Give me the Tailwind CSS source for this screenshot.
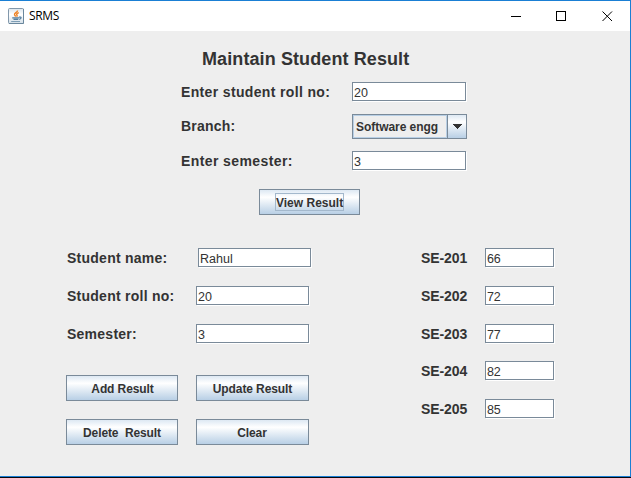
<!DOCTYPE html>
<html lang="en">
<head>
<meta charset="utf-8">
<title>SRMS</title>
<script src="https://cdn.jsdelivr.net/npm/@tailwindcss/browser@4"></script>
</head>
<body class="w-[631px] h-[478px] overflow-hidden bg-[#05070d] font-['Liberation_Sans',Arial,sans-serif] text-[#333333]">
<div class="w-[631px] h-[477px] border-t border-r border-b border-[#1a7fd4] bg-[#eeeeee] flex flex-col whitespace-pre">
  <header class="h-[30px] shrink-0 bg-white flex items-center pl-2">
    <svg class="w-4 h-4 shrink-0" viewBox="0 0 16 16">
      <defs><linearGradient id="ic" x1="0" y1="0" x2="0" y2="1"><stop offset="0" stop-color="#dbe5ec"/><stop offset=".4" stop-color="#fff"/><stop offset="1" stop-color="#d3dfe8"/></linearGradient></defs>
      <rect x=".5" y=".5" width="15" height="15" rx="1" fill="url(#ic)" stroke="#8298ab"/>
      <path d="M1 15.5H15.5V1" fill="none" stroke="#6a879d"/>
      <path d="M9.6 2.4C9.6 4.3 6.3 5 6.5 6.6C6.6 7.3 7.4 7.6 7.7 8.6M10.8 4.7C8.8 5.6 8.2 6.3 9 7.2C9.4 7.8 9 8.3 8.7 8.7" fill="none" stroke="#ee8122" stroke-width="1.4"/>
      <path d="M4.2 9.8H11M11 9.2C13.9 8.5 13.7 10.8 11.2 11.4M5.5 11.4H10.3" fill="none" stroke="#557f9f" stroke-width="1.2"/>
      <path d="M3.2 13.5H12" stroke="#7d9db5"/>
    </svg>
    <span class="ml-[5px] w-[34px] font-['Open_Sans','Noto_Sans',sans-serif] text-[12px] leading-4 text-black tracking-[-0.35px]">SRMS</span>
    <div class="ml-auto mr-[17px] flex items-center gap-[35px]">
      <svg class="w-[10px] h-[11px]" viewBox="0 0 10 11" shape-rendering="crispEdges"><path d="M0 5.5H10" stroke="#000"/></svg>
      <svg class="w-[10px] h-[10px] mr-px" viewBox="0 0 10 10" shape-rendering="crispEdges"><path d="M.5.5H9.5V9.5H.5Z" fill="none" stroke="#000"/></svg>
      <svg class="w-[11px] h-[11px]" viewBox="0 0 11 11"><path d="M.5.5L10 10M10 .5L.5 10" stroke="#000" stroke-width="1"/></svg>
    </div>
  </header>

  <main class="flex flex-col text-[14px] font-bold leading-[19px]">
    <h1 class="mt-[17px] ml-[202px] h-[22px] text-[18px] leading-[22px] tracking-[0.1px]">Maintain Student Result</h1>
    <section class="mt-[12px] ml-[181px] flex flex-col">
      <div class="flex h-[19px]"><label class="w-[171px] leading-[21px] tracking-[0.35px]">Enter student roll no:</label><div class="w-[114px] h-[19px] border border-[#7a8a99] bg-white shadow-[1px_1px_0_#fff] pl-px pt-px text-[12.5px] leading-[18px] font-normal">20</div></div>
      <div class="mt-[13px] flex h-[25px]"><label class="w-[171px] leading-[25px] tracking-[0.2px]">Branch:</label>
        <div class="w-[115px] h-[25px] border border-[#7a8a99] flex">
          <span class="w-[94px] border border-[#b8cfe5] pl-[2px] text-[12px] leading-[22px] tracking-[-0.05px]">Software engg</span>
          <span class="flex-1 border-l border-[#7a8a99] bg-linear-to-b from-[#dde8f3] via-white via-30% to-[#b8cfe5] flex items-center justify-center"><svg class="w-[10px] h-[5px]" viewBox="0 0 10 5" shape-rendering="crispEdges"><path d="M0 0H10L5 5Z" fill="#333"/></svg></span>
        </div>
      </div>
      <div class="mt-[12px] flex h-[19px]"><label class="w-[171px] leading-[21px] tracking-[0.4px]">Enter semester:</label><div class="w-[114px] h-[19px] border border-[#7a8a99] bg-white shadow-[1px_1px_0_#fff] pl-px pt-px text-[12.5px] leading-[18px] font-normal">3</div></div>
    </section>
    <button class="mt-[19px] ml-[259px] w-[101px] h-[26px] border border-[#7a8a99] bg-linear-to-b from-[#dde8f3] via-white via-30% to-[#b8cfe5] flex items-center justify-center text-[12px]"><span class="w-[69px] h-[18px] border border-[#a3b8cc] leading-[18px]">View Result</span></button>

    <div class="mt-[33px] ml-[66px] flex">
      <section class="w-[355px] flex flex-col">
        <div class="flex h-[19px]"><label class="w-[132px] pl-px leading-[21px] tracking-[0.25px]">Student name:</label><div class="w-[113px] h-[19px] border border-[#7a8a99] bg-white shadow-[1px_1px_0_#fff] pl-px pt-px text-[12.5px] leading-[18px] font-normal">Rahul</div></div>
        <div class="mt-[19px] flex h-[19px]"><label class="w-[130px] pl-px leading-[21px] tracking-[0.25px]">Student roll no:</label><div class="w-[113px] h-[19px] border border-[#7a8a99] bg-white shadow-[1px_1px_0_#fff] pl-px pt-px text-[12.5px] leading-[18px] font-normal">20</div></div>
        <div class="mt-[19px] flex h-[19px]"><label class="w-[130px] pl-px leading-[21px] tracking-[0.25px]">Semester:</label><div class="w-[113px] h-[19px] border border-[#7a8a99] bg-white shadow-[1px_1px_0_#fff] pl-px pt-px text-[12.5px] leading-[18px] font-normal">3</div></div>
        <div class="mt-[32px] grid grid-cols-[112px_113px] gap-x-[18px] gap-y-[18px] text-[12px] tracking-[-0.1px]">
          <button class="h-[26px] pt-[2px] pl-px border border-[#7a8a99] bg-linear-to-b from-[#dde8f3] via-white via-30% to-[#b8cfe5]">Add Result</button>
          <button class="h-[26px] pt-[2px] border border-[#7a8a99] bg-linear-to-b from-[#dde8f3] via-white via-30% to-[#b8cfe5]">Update Result</button>
          <button class="h-[26px] pt-[2px] border border-[#7a8a99] bg-linear-to-b from-[#dde8f3] via-white via-30% to-[#b8cfe5]">Delete  Result</button>
          <button class="h-[26px] pt-[2px] pr-px border border-[#7a8a99] bg-linear-to-b from-[#dde8f3] via-white via-30% to-[#b8cfe5]">Clear</button>
        </div>
      </section>
      <section class="flex flex-col tracking-[-0.1px]">
        <div class="flex h-[19px]"><label class="w-[64px] leading-[21px]">SE-201</label><div class="w-[69px] h-[19px] border border-[#7a8a99] bg-white shadow-[1px_1px_0_#fff] pl-px pt-px text-[12.5px] leading-[18px] font-normal">66</div></div>
        <div class="mt-[19px] flex h-[19px]"><label class="w-[64px] leading-[21px]">SE-202</label><div class="w-[69px] h-[19px] border border-[#7a8a99] bg-white shadow-[1px_1px_0_#fff] pl-px pt-px text-[12.5px] leading-[18px] font-normal">72</div></div>
        <div class="mt-[19px] flex h-[19px]"><label class="w-[64px] leading-[21px]">SE-203</label><div class="w-[69px] h-[19px] border border-[#7a8a99] bg-white shadow-[1px_1px_0_#fff] pl-px pt-px text-[12.5px] leading-[18px] font-normal">77</div></div>
        <div class="mt-[18px] flex h-[19px]"><label class="w-[64px] leading-[21px]">SE-204</label><div class="w-[69px] h-[19px] border border-[#7a8a99] bg-white shadow-[1px_1px_0_#fff] pl-px pt-px text-[12.5px] leading-[18px] font-normal">82</div></div>
        <div class="mt-[19px] flex h-[19px]"><label class="w-[64px] leading-[21px]">SE-205</label><div class="w-[69px] h-[19px] border border-[#7a8a99] bg-white shadow-[1px_1px_0_#fff] pl-px pt-px text-[12.5px] leading-[18px] font-normal">85</div></div>
      </section>
    </div>
  </main>
</div>
</body>
</html>
